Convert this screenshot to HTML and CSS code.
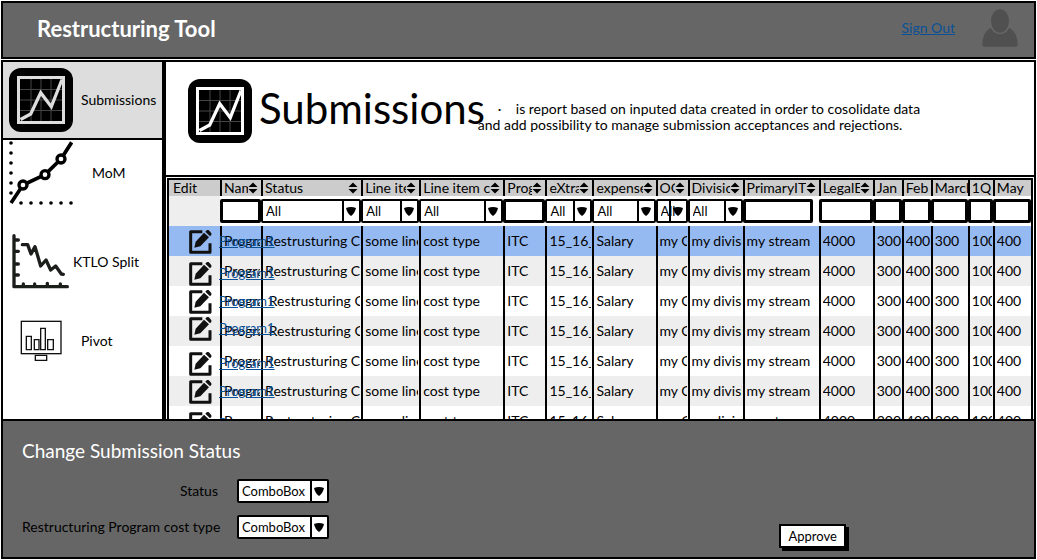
FILE: index.html
```html
<!DOCTYPE html>
<html lang="en">
<head>
<meta charset="utf-8">
<title>Restructuring Tool</title>
<link rel="stylesheet" href="styles.css">
</head>
<body>
<svg class="defs" aria-hidden="true">
  <symbol id="chart" viewBox="0 0 64 64">
    <rect width="64" height="64" rx="12" fill="#000"/>
    <path d="M22 11V53M32 11V53M42 11V53M11 21.500H53M11 32H53M11 42.500H53" stroke="#444" stroke-width="1"/>
    <rect x="9.500" y="9.500" width="45" height="45" fill="none" stroke="currentColor" stroke-width="3"/>
    <path d="M11.500 51.500L21.700 46L31.700 24.700L42.300 38.700L53 11.500" fill="none" stroke="currentColor" stroke-width="3.200"/>
  </symbol>
  <symbol id="pencil" viewBox="86 182 69 72">
    <path d="M126 187H91V249H149V222" fill="none" stroke="#111" stroke-width="9" stroke-linejoin="round"/>
    <path d="M102 235L106 217L131 190L146 204L120 231Z" fill="#111"/>
    <path d="M135 187L139 183Q143 180 147 184L152 190Q155 194 152 198L149 201Z" fill="#111"/>
  </symbol>
  <symbol id="sort" viewBox="0 0 10 12">
    <path d="M5 0.500L9.500 5H0.500ZM0.500 7H9.500L5 11.500Z" fill="#000"/>
  </symbol>
</svg>
<div class="app">
  <header class="topbar">
    <h1 class="brand">Restructuring Tool</h1>
    <a class="signout" href="#">Sign Out</a>
    <svg class="avatar" viewBox="846 28 108 114" aria-hidden="true">
      <path d="M847 136Q846 100 872 84Q882 103 900 103Q918 103 928 84Q954 100 953 136Q953 141 948 141H852Q847 141 847 136Z" fill="#505050"/>
      <ellipse cx="900" cy="64" rx="27" ry="35" fill="#505050"/>
    </svg>
  </header>

  <div class="workspace">
    <nav class="sidebar">
      <a class="nav-item nav-item--active" href="#"><svg class="icon-chart"><use href="#chart"/></svg><span>Submissions</span></a>
      <a class="nav-item nav-item--mom" href="#">
        <svg class="icon-mom" viewBox="27 30 192 195">
          <path d="M33 39V190M63 219H214" fill="none" stroke="#000" stroke-width="11" stroke-linecap="round" stroke-dasharray="0 30"/>
          <path d="M33 219L69 165L135 134L183 87L215 37" fill="none" stroke="#000" stroke-width="11" stroke-linejoin="round"/>
          <g fill="#fff" stroke="#000" stroke-width="10"><circle cx="69" cy="165" r="12"/><circle cx="135" cy="134" r="12"/><circle cx="183" cy="87" r="12"/></g>
        </svg><span>MoM</span></a>
      <a class="nav-item nav-item--ktlo" href="#">
        <svg class="icon-ktlo" viewBox="36 312 171 165" fill="none" stroke="#1c1e1c" stroke-width="10" stroke-linecap="round" stroke-linejoin="round">
          <path d="M42 317V470H202M42 330H55M42 364H55M42 402H55M42 435H55M70 470V462M104 470V462M142 470V460M181 470V462"/>
          <path d="M67 344H83L93 372L105 350L122 408L138 390L152 420L167 408L184 432L190 433"/>
        </svg><span>KTLO Split</span></a>
      <a class="nav-item nav-item--pivot" href="#">
        <svg class="icon-pivot" viewBox="60 570 126 123" fill="none" stroke="#111">
          <rect x="64" y="574" width="119" height="97" stroke-width="4"/>
          <path d="M79 619H94V659H79ZM103 629H117V659H103ZM122 595H136V659H122ZM143 629H160V659H143ZM106 676H140V691H106Z" stroke-width="4"/>
        </svg><span>Pivot</span></a>
    </nav>

    <main class="content">
      <section class="intro">
        <svg class="icon-chart icon-chart--white"><use href="#chart"/></svg>
        <h2 class="intro-title">Submissions</h2>
        <p class="intro-text">·&nbsp;&nbsp; &nbsp;is report based on inputed data created in order to cosolidate data<br>and add possibility to manage submission acceptances and rejections.</p>
      </section>

      <div class="grid-frame">
      <table class="grid">
        <colgroup>
          <col class="w51"><col class="w41"><col class="w100"><col class="w58"><col class="w84"><col class="w42"><col class="w47"><col class="w63"><col class="w32"><col class="w55"><col class="w76"><col class="w54"><col class="w29"><col class="w29"><col class="w37"><col class="w25"><col class="w38">
        </colgroup>
        <thead>
          <tr class="heads">
            <th><div><span>Edit</span></div></th>
            <th><div><span>Name</span><svg><use href="#sort"/></svg></div></th>
            <th><div><span>Status</span><svg><use href="#sort"/></svg></div></th>
            <th><div><span>Line item</span><svg><use href="#sort"/></svg></div></th>
            <th><div><span>Line item cost</span><svg><use href="#sort"/></svg></div></th>
            <th><div><span>Program</span><svg><use href="#sort"/></svg></div></th>
            <th><div><span>eXtra</span><svg><use href="#sort"/></svg></div></th>
            <th><div><span>expense</span><svg><use href="#sort"/></svg></div></th>
            <th><div><span>OC</span><svg><use href="#sort"/></svg></div></th>
            <th><div><span>Division</span><svg><use href="#sort"/></svg></div></th>
            <th><div><span>PrimaryIT</span><svg><use href="#sort"/></svg></div></th>
            <th><div><span>LegalEntity</span><svg><use href="#sort"/></svg></div></th>
            <th><div><span>Jan</span></div></th>
            <th><div><span>Feb</span></div></th>
            <th><div><span>March</span></div></th>
            <th><div><span>1Q</span></div></th>
            <th><div><span>May</span></div></th>
          </tr>
          <tr class="filters">
            <td></td>
            <td><input class="box" type="text" aria-label="Filter by name"></td>
            <td><select class="box" aria-label="Filter by status"><option>All</option></select></td>
            <td><select class="box" aria-label="Filter by line item"><option>All</option></select></td>
            <td><select class="box" aria-label="Filter by line item cost"><option>All</option></select></td>
            <td><input class="box" type="text" aria-label="Filter by program"></td>
            <td><select class="box" aria-label="Filter by extra"><option>All</option></select></td>
            <td><select class="box" aria-label="Filter by expense"><option>All</option></select></td>
            <td><select class="box" aria-label="Filter by OC"><option>All</option></select></td>
            <td><select class="box" aria-label="Filter by division"><option>All</option></select></td>
            <td class="short"><input class="box" type="text" aria-label="Filter by primary IT"></td>
            <td><input class="box" type="text" aria-label="Filter by legal entity"></td>
            <td><input class="box" type="text" aria-label="Filter by January"></td>
            <td><input class="box" type="text" aria-label="Filter by February"></td>
            <td><input class="box" type="text" aria-label="Filter by March"></td>
            <td><input class="box" type="text" aria-label="Filter by first quarter"></td>
            <td><input class="box" type="text" aria-label="Filter by May"></td>
          </tr>
        </thead>
        <tbody>
          <tr class="selected"><td><div class="marks"><svg><use href="#pencil"/></svg><a href="#">Program1</a></div></td><td><span>Program1</span></td><td><span>Restrusturing C</span></td><td><span>some line</span></td><td><span>cost type</span></td><td><span>ITC</span></td><td><span>15_16_</span></td><td><span>Salary</span></td><td><span>my C</span></td><td><span>my division</span></td><td><span>my stream</span></td><td><span>4000</span></td><td><span>300</span></td><td><span>400</span></td><td><span>300</span></td><td><span>100</span></td><td><span>400</span></td></tr>
          <tr><td><div class="marks marks--low"><svg><use href="#pencil"/></svg><a href="#">Program1</a></div></td><td><span>Program1</span></td><td><span>Restrusturing C</span></td><td><span>some line</span></td><td><span>cost type</span></td><td><span>ITC</span></td><td><span>15_16_</span></td><td><span>Salary</span></td><td><span>my C</span></td><td><span>my division</span></td><td><span>my stream</span></td><td><span>4000</span></td><td><span>300</span></td><td><span>400</span></td><td><span>300</span></td><td><span>100</span></td><td><span>400</span></td></tr>
          <tr><td><div class="marks"><svg><use href="#pencil"/></svg><a href="#">Program1</a></div></td><td><span>Program1</span></td><td><span>&nbsp;Restrusturing C</span></td><td><span>some line</span></td><td><span>cost type</span></td><td><span>ITC</span></td><td><span>15_16_</span></td><td><span>Salary</span></td><td><span>my C</span></td><td><span>my division</span></td><td><span>my stream</span></td><td><span>4000</span></td><td><span>300</span></td><td><span>400</span></td><td><span>300</span></td><td><span>100</span></td><td><span>400</span></td></tr>
          <tr><td><div class="marks marks--high"><svg><use href="#pencil"/></svg><a href="#">Program1</a></div></td><td><span>Program1</span></td><td><span>&nbsp;Restrusturing C</span></td><td><span>some line</span></td><td><span>cost type</span></td><td><span>ITC</span></td><td><span>15_16_</span></td><td><span>Salary</span></td><td><span>my C</span></td><td><span>my division</span></td><td><span>my stream</span></td><td><span>4000</span></td><td><span>300</span></td><td><span>400</span></td><td><span>300</span></td><td><span>100</span></td><td><span>400</span></td></tr>
          <tr><td><div class="marks marks--low"><svg><use href="#pencil"/></svg><a href="#">Program1</a></div></td><td><span>Program1</span></td><td><span>Restrusturing C</span></td><td><span>some line</span></td><td><span>cost type</span></td><td><span>ITC</span></td><td><span>15_16_</span></td><td><span>Salary</span></td><td><span>my C</span></td><td><span>my division</span></td><td><span>my stream</span></td><td><span>4000</span></td><td><span>300</span></td><td><span>400</span></td><td><span>300</span></td><td><span>100</span></td><td><span>400</span></td></tr>
          <tr><td><div class="marks"><svg><use href="#pencil"/></svg><a href="#">Program1</a></div></td><td><span>Program1</span></td><td><span>Restrusturing C</span></td><td><span>some line</span></td><td><span>cost type</span></td><td><span>ITC</span></td><td><span>15_16_</span></td><td><span>Salary</span></td><td><span>my C</span></td><td><span>my division</span></td><td><span>my stream</span></td><td><span>4000</span></td><td><span>300</span></td><td><span>400</span></td><td><span>300</span></td><td><span>100</span></td><td><span>400</span></td></tr>
          <tr><td><div class="marks marks--low"><svg><use href="#pencil"/></svg><a href="#">Program1</a></div></td><td><span>Program1</span></td><td><span>Restrusturing C</span></td><td><span>some line</span></td><td><span>cost type</span></td><td><span>ITC</span></td><td><span>15_16_</span></td><td><span>Salary</span></td><td><span>my C</span></td><td><span>my division</span></td><td><span>my stream</span></td><td><span>4000</span></td><td><span>300</span></td><td><span>400</span></td><td><span>300</span></td><td><span>100</span></td><td><span>400</span></td></tr>
        </tbody>
      </table>
      </div>
    </main>
  </div>

  <footer class="status-panel">
    <h2 class="panel-title">Change Submission Status</h2>
    <form class="panel-form">
      <div class="fields">
        <label for="status">Status</label>
        <select class="box" id="status"><option>ComboBox</option></select>
        <label for="cost-type">Restructuring Program cost type</label>
        <select class="box" id="cost-type"><option>ComboBox</option></select>
      </div>
      <button class="approve" type="button">Approve</button>
    </form>
  </footer>
</div>
</body>
</html>
```
FILE: styles.css
```css
* { box-sizing: border-box; }

body {
  margin: 0;
  background: #fff;
  color: #000;
  font: 14px/16px Lato, sans-serif;
}

h1, h2, p { margin: 0; }
a { color: #0a5197; }
.defs { display: none; }

.app {
  display: flex;
  flex-direction: column;
  height: 100vh;
  padding: 1px;
}

.topbar {
  display: flex;
  align-items: center;
  flex: none;
  height: 58px;
  padding: 0 16px 4px 34px;
  background: #666;
  border: 2px solid #000;
}
.brand {
  flex: 1;
  padding-top: 2px;
  color: #fff;
  font-size: 22px;
  line-height: 24px;
}
.signout { margin-right: 27px; }
.avatar { width: 36px; height: 38px; }

.workspace {
  display: flex;
  flex: 1;
  min-height: 0;
  margin-top: 1px;
  overflow: hidden;
}

.sidebar {
  flex: none;
  width: 163px;
  border: 2px solid #000;
  border-bottom: 0;
}
.nav-item {
  display: flex;
  align-items: center;
  color: #000;
  text-decoration: none;
}
.nav-item svg { flex: none; }
.nav-item--active {
  gap: 8px;
  padding: 6px;
  height: 78px;
  background: #ddd;
  border-bottom: 2px solid #000;
}
.icon-chart { flex: none; width: 64px; height: 64px; color: #ddd; }
.icon-chart--white { color: #fff; }
.nav-item--mom { gap: 19px; padding-left: 6px; }
.nav-item--ktlo { gap: 4px; padding: 29px 0 0 9px; }
.nav-item--pivot { gap: 19px; padding: 31px 0 0 17px; }
.icon-mom { width: 64px; height: 65px; }
.icon-ktlo { width: 57px; height: 55px; }
.icon-pivot { width: 42px; height: 41px; }

.content {
  display: flex;
  flex-direction: column;
  flex: 1;
  min-width: 0;
  border: 2px solid #000;
  border-bottom: 0;
}
.intro {
  display: flex;
  flex: none;
  align-items: center;
  height: 115px;
  padding: 0 20px 16px 22px;
  border-bottom: 2px solid #000;
}
.intro-title {
  margin: -6px 0 0 7px;
  font-size: 42px;
  font-weight: 400;
  line-height: 48px;
}
.intro-text {
  margin: 12px 0 0 -7px;
  text-indent: 20px;
}

.grid-frame {
  margin: 1px 1px 0;
  border: 2px solid #000;
  border-bottom: 0;
}
.grid {
  width: 100%;
  table-layout: fixed;
  border-collapse: separate;
  border-spacing: 0;
}
.w25 { width: 25px; }
.w29 { width: 29px; }
.w32 { width: 32px; }
.w37 { width: 37px; }
.w38 { width: 38px; }
.w41 { width: 41px; }
.w42 { width: 42px; }
.w47 { width: 47px; }
.w51 { width: 51px; }
.w54 { width: 54px; }
.w55 { width: 55px; }
.w58 { width: 58px; }
.w63 { width: 63px; }
.w76 { width: 76px; }
.w84 { width: 84px; }
.w100 { width: 100px; }

.grid th,
.grid td {
  height: 30px;
  padding: 0 1px 0 2px;
  border-left: 2px solid #000;
  text-align: left;
  font-weight: 400;
}
.grid th:first-child,
.grid td:first-child { border-left: 0; }
.grid td span {
  display: block;
  overflow: hidden;
  white-space: nowrap;
}
.heads { background: #ccc; }
.grid .heads th { height: 16px; padding-right: 3px; }
.grid .heads th:first-child { padding-left: 4px; }
.grid .heads th:nth-child(n+13) { padding-right: 0; }
.heads div { display: flex; align-items: center; }
.heads span { flex: 1; min-width: 0; overflow: hidden; white-space: nowrap; }
.heads svg { flex: none; width: 10px; height: 12px; }
.grid .filters td {
  padding: 0;
  border-left: 0;
  background: #fff;
}
.grid .filters .short { padding-right: 6px; }
.grid .filters td:first-child { background: #eee; }
tbody tr:nth-child(even) { background: #eee; }
tbody .selected { background: #95b9f1; }

.box {
  display: block;
  width: 100%;
  height: 24px;
  margin: 0;
  padding: 0 3px;
  border: 2px solid #000;
  border-radius: 2px;
  background: #fff;
  color: #000;
  font: inherit;
  font-size: 13px;
}
input.box { border-width: 3px; }
select.box {
  appearance: none;
  background: #fff url("data:image/svg+xml,%3Csvg xmlns='http://www.w3.org/2000/svg' width='17' height='20'%3E%3Cpath d='M1 0V20' stroke='%23000' stroke-width='2'/%3E%3Cpath d='M4 7Q9 5 14 7Q13 12 9 15Q5 12 4 7Z'/%3E%3C/svg%3E") no-repeat right center;
}

tbody td:first-child { position: relative; }
.marks {
  position: absolute;
  z-index: 1;
  top: 4px;
  left: 20px;
  display: flex;
  align-items: center;
  gap: 7px;
  font-size: 13px;
}
.marks--high { top: 1px; }
.marks--low { top: 6px; }
.marks svg { width: 23px; height: 24px; }
.marks a { padding-bottom: 3px; }

.status-panel {
  flex: none;
  height: 140px;
  padding: 20px 19px 0;
  background: #666;
  border: 2px solid #000;
}
.panel-title {
  color: #fff;
  font-size: 19px;
  font-weight: 400;
  line-height: 20px;
}
.panel-form { display: flex; align-items: flex-end; }
.fields {
  display: grid;
  grid-template-columns: 196px 92px;
  gap: 12px 19px;
  align-items: center;
  margin-top: 18px;
}
.fields label { text-align: right; white-space: nowrap; }
.approve {
  margin: 20px 17% -9px auto;
  width: 67px;
  height: 24px;
  padding: 0;
  border: 2px solid #000;
  background: #fff;
  box-shadow: 3px 3px 0 #000;
  color: #000;
  font: inherit;
  font-size: 13px;
}
```
